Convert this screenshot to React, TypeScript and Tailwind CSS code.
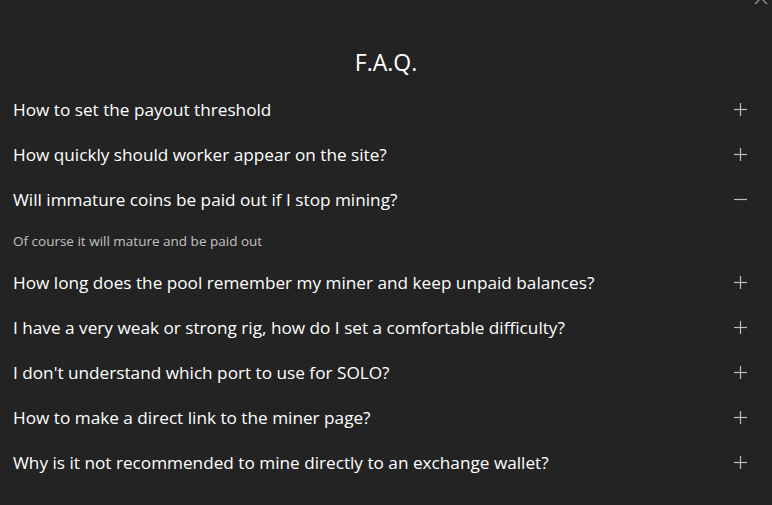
import React, { useState } from 'react';

const FAQ_ITEMS = [
  { q: 'How to set the payout threshold', a: 'You can set the payout threshold on your miner page in the settings section' },
  { q: 'How quickly should worker appear on the site?', a: 'Usually the worker appears within a few minutes after the first share' },
  { q: 'Will immature coins be paid out if I stop mining?', a: 'Of course it will mature and be paid out' },
  { q: 'How long does the pool remember my miner and keep unpaid balances?', a: 'Balances are kept for a long time' },
  { q: 'I have a very weak or strong rig, how do I set a comfortable difficulty?', a: 'Use the password field to set a fixed difficulty' },
  { q: "I don't understand which port to use for SOLO?", a: 'Use the SOLO port listed on the start page' },
  { q: 'How to make a direct link to the miner page?', a: 'Add your wallet address to the URL' },
  { q: 'Why is it not recommended to mine directly to an exchange wallet?', a: 'Exchanges may change deposit addresses' },
];

const Toggle: React.FC<{ open: boolean }> = ({ open }) => (
  <svg width="15" height="15" viewBox="0 0 15 15" className="text-[#bdbdbd]">
    <path d="M1 7.5h13" stroke="currentColor" strokeWidth="1.2" />
    {!open && <path d="M7.5 1v13" stroke="currentColor" strokeWidth="1.2" />}
  </svg>
);

export default function App() {
  const [openIndex, setOpenIndex] = useState<number | null>(2);

  return (
    <div
      className="relative w-[772px] h-[505px] overflow-hidden bg-[#232323] text-white"
      style={{ fontFamily: '"Segoe UI", "Open Sans", sans-serif' }}
    >
      {/* close button, cut off at top */}
      <button className="absolute right-[4px] top-[-9px] text-[#9a9a9a]">
        <svg width="14" height="14" viewBox="0 0 14 14">
          <path d="M1 1l12 12M13 1L1 13" stroke="currentColor" strokeWidth="1.2" />
        </svg>
      </button>

      <h2 className="pt-[47px] pb-[10px] text-center text-[23px] leading-[30px] font-normal">F.A.Q.</h2>

      <div className="flex flex-col">
        {FAQ_ITEMS.map((item, i) => {
          const open = openIndex === i;
          return (
            <div key={item.q}>
              <button
                onClick={() => setOpenIndex(open ? null : i)}
                className="flex h-[45px] w-full items-center justify-between pl-[13px] pr-[24px] text-left text-[17.2px]"
              >
                <span>{item.q}</span>
                <Toggle open={open} />
              </button>
              {open && (
                <div className="flex h-[38px] items-center pl-[13px] text-[13.5px] text-[#c2c2c2]">{item.a}</div>
              )}
            </div>
          );
        })}
      </div>
    </div>
  );
}
